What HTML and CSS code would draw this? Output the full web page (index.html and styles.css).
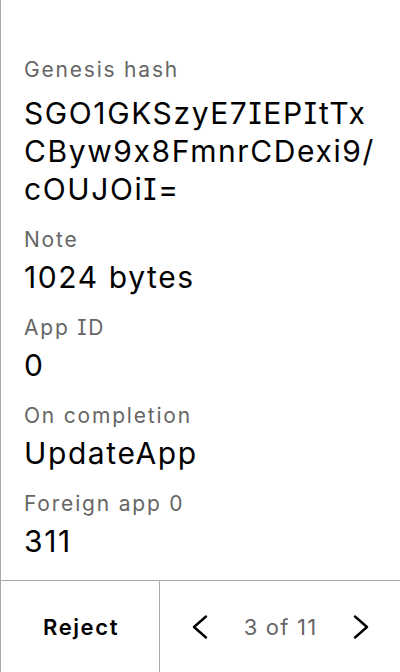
FILE: index.html
```html
<!DOCTYPE html>
<html lang="en">
<head>
<meta charset="utf-8">
<title>Transaction</title>
<link rel="stylesheet" href="styles.css">
</head>
<body>
<div class="app">
  <main class="content">
    <div class="field">
      <div class="label">Genesis hash</div>
      <div class="value hash"><span class="hl">SGO1GKSzyE7IEPItTx</span><span class="hl">CByw9x8FmnrCDexi9/</span><span class="hl">cOUJOiI=</span></div>
    </div>
    <div class="field">
      <div class="label">Note</div>
      <div class="value">1024 bytes</div>
    </div>
    <div class="field">
      <div class="label">App ID</div>
      <div class="value">0</div>
    </div>
    <div class="field">
      <div class="label">On completion</div>
      <div class="value">UpdateApp</div>
    </div>
    <div class="field">
      <div class="label">Foreign app 0</div>
      <div class="value">311</div>
    </div>
  </main>
  <footer class="footer">
    <button class="reject">Reject</button>
    <div class="pager">
      <svg class="chev" width="16" height="24" viewBox="0 0 16 24"><path d="M14 1.5 L2 12 L14 22.5" fill="none" stroke="#000" stroke-width="2.4" stroke-linecap="round" stroke-linejoin="round"/></svg>
      <span class="count">3 of 11</span>
      <svg class="chev" width="16" height="24" viewBox="0 0 16 24"><path d="M2 1.5 L14 12 L2 22.5" fill="none" stroke="#000" stroke-width="2.4" stroke-linecap="round" stroke-linejoin="round"/></svg>
    </div>
  </footer>
</div>
</body>
</html>
```
FILE: styles.css
```css
* { box-sizing: border-box; }
html, body { margin: 0; padding: 0; background: #fff; }
body {
  font-family: Inter, "Noto Sans", sans-serif;
  color: #000;
  font-feature-settings: "calt" 0, "cv08" 1;
}
.app {
  width: 400px;
  height: 672px;
  display: flex;
  flex-direction: column;
  border-left: 1px solid #a9a9a9;
}
.content {
  flex: 1;
  padding: 56px 20px 0 23px;
  display: flex;
  flex-direction: column;
  gap: 18px;
}
.field { display: flex; flex-direction: column; gap: 4px; }
.label { font-size: 21px; line-height: 28px; color: #666; letter-spacing: 1.8px; }
.value { font-size: 30px; line-height: 38px; color: #000; letter-spacing: 1.6px; }
.hash { margin-top: 6px; }
.hl { display: block; white-space: nowrap; }
.footer {
  height: 92px;
  border-top: 1px solid #a9a9a9;
  display: flex;
}
.reject {
  width: 159px;
  border: 0;
  border-right: 1px solid #a9a9a9;
  background: #fff;
  font-family: Inter, "Noto Sans", sans-serif;
  font-feature-settings: "calt" 0;
  font-size: 22px;
  font-weight: 600;
  letter-spacing: 1.6px;
  color: #000;
  padding: 0 0 0 2px;
}
.pager {
  flex: 1;
  display: flex;
  align-items: center;
  justify-content: space-between;
  padding: 0 31px 0 32px;
}
.count { font-size: 22px; color: #666; letter-spacing: 1.2px; }
.chev { display: block; }
```
